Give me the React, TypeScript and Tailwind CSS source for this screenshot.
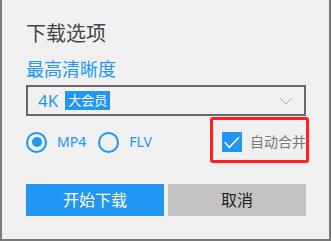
import { ChevronDown } from 'lucide-react';

const FONT = { fontFamily: '"Noto Sans", "Noto Sans CJK SC", sans-serif' };

function Radio({ checked, label }: { checked?: boolean; label: string }) {
  return (
    <label className="flex items-center">
      <span className="w-[21px] h-[21px] rounded-full border-[2.5px] border-[#2196f3] flex items-center justify-center">
        {checked && <span className="w-[10px] h-[10px] rounded-full bg-[#2196f3]" />}
      </span>
      <span className="ml-[10px] text-[14px] leading-none text-[#2196f3]">{label}</span>
    </label>
  );
}

export default function App() {
  return (
    <div
      className="w-[331px] h-[241px] bg-[#f0f0f0] border-l-2 border-r-2 border-b-2 border-[#7a7a7a] pl-[24px] pr-[23px] flex flex-col"
      style={FONT}
    >
      {/* 标题 */}
      <h1 className="pt-[24px] text-[20px] leading-[20px] text-[#454545]">下载选项</h1>
      <p className="mt-[16px] text-[18px] leading-[18px] text-[#2196f3]">最高清晰度</p>

      {/* 清晰度选择 */}
      <button className="mt-[7px] h-[31px] w-[280px] border-2 border-[#686868] flex items-center pl-[10px] pr-[6px]">
        <span className="text-[17px] leading-none text-[#2196f3]">4K</span>
        <span className="ml-[7px] h-[19px] px-[3px] bg-[#2196f3] text-white text-[13px] leading-[19px]">大会员</span>
        <ChevronDown size={24} strokeWidth={0.9} className="ml-auto text-[#a8a8a8]" />
      </button>

      {/* 格式 + 合并 */}
      <div className="mt-[15px] h-[22px] w-[280px] flex items-center">
        <Radio checked label="MP4" />
        <div className="ml-[12px]">
          <Radio label="FLV" />
        </div>
        <label className="ml-auto relative flex items-center">
          <span className="w-[20px] h-[20px] bg-[#2196f3] flex items-center justify-center">
            <svg width="20" height="20" viewBox="0 0 20 20" fill="none">
              <path d="M2.7 10.3 L7.3 15.3 L17 5.3" stroke="white" strokeWidth="1.5" />
            </svg>
          </span>
          <span className="ml-[8px] text-[14px] leading-none text-[#777777]">自动合并</span>
          <span className="absolute -left-[12px] -right-[3px] -top-[15px] -bottom-[11px] border-[3px] border-[#ff1f1f] rounded-[3px] pointer-events-none" />
        </label>
      </div>

      {/* 按钮 */}
      <div className="mt-[31px] w-[280px] flex gap-[4px]">
        <button className="w-[138px] h-[32px] bg-[#2196f3] text-white text-[16px]">开始下载</button>
        <button className="w-[138px] h-[32px] bg-[#c3c3c3] text-[#222222] text-[16px]">取消</button>
      </div>
    </div>
  );
}
